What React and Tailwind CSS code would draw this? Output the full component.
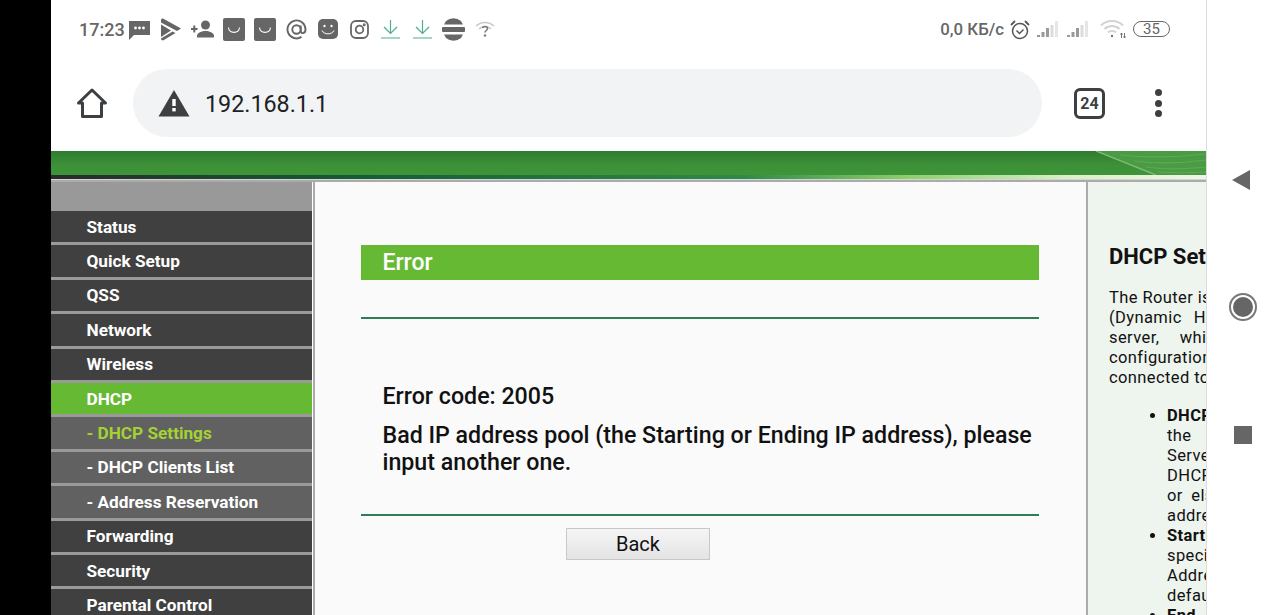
import React from "react";

const G = "#666666";

function Msg() {
  return (
    <svg width="21" height="22" viewBox="0 0 21 22" fill={G}>
      <path d="M0 3h21v14H5l-5 5z" />
      <circle cx="6.500" cy="10" r="1.400" fill="#fff" />
      <circle cx="10.500" cy="10" r="1.400" fill="#fff" />
      <circle cx="14.500" cy="10" r="1.400" fill="#fff" />
    </svg>
  );
}
function Play() {
  return (
    <svg width="22" height="24" viewBox="0 0 22 24" fill={G}>
      <path d="M1 3Q1 1 3 1.500L21 11.500 17 14 1 5.500z" />
      <path d="M1 7.500 11 13.500 1 20z" />
      <path d="M12.500 14.500 15.500 16 3 23.500Q1 23.500 1 21.500z" />
    </svg>
  );
}
function AddUser() {
  return (
    <svg width="23" height="18" viewBox="0 0 23 18" fill={G}>
      <path d="M0 8h6.500v2H0zM2.300 5.500h2v7h-2z" />
      <circle cx="14.500" cy="5" r="4.500" />
      <path d="M6 16c0-3.500 5-5 8.500-5s8.500 1.500 8.500 5v1.500H6z" />
    </svg>
  );
}
function Bag() {
  return (
    <svg width="22" height="23" viewBox="0 0 22 23">
      <rect x="0" y="0" width="22" height="23" rx="2" fill={G} />
      <path d="M5.500 9.500c.6 6.500 10.400 6.500 11 0" stroke="#fff" strokeWidth="1.100" fill="none" />
    </svg>
  );
}
function At() {
  return (
    <svg width="21" height="21" viewBox="0 0 21 21" fill="none" stroke={G} strokeWidth="1.900">
      <circle cx="10.500" cy="10.500" r="4.200" />
      <path d="M14.700 6.500v5.500c0 3 4.800 3 4.800-1.500a9 9 0 1 0-4 7.400" />
    </svg>
  );
}
function Smile() {
  return (
    <svg width="20" height="20" viewBox="0 0 20 20">
      <rect width="20" height="20" rx="5" fill={G} />
      <circle cx="6.500" cy="7" r="1.200" fill="#fff" />
      <circle cx="13.500" cy="7" r="1.200" fill="#fff" />
      <path d="M4 11.500c2 4.500 10 4.500 12 0" stroke="#fff" strokeWidth="1" fill="none" />
    </svg>
  );
}
function Insta() {
  return (
    <svg width="19" height="19" viewBox="0 0 19 19" fill="none" stroke={G} strokeWidth="1.800">
      <rect x="1" y="1" width="17" height="17" rx="5" />
      <circle cx="9.500" cy="9.500" r="3.800" />
      <circle cx="14.200" cy="4.800" r=".6" fill={G} />
    </svg>
  );
}
function Down() {
  return (
    <svg width="19" height="20" viewBox="0 0 19 20" fill="none" stroke="#4fae92" strokeWidth="1.200">
      <path d="M9.500 1v13M3 8l6.500 6.500L16 8M0 19h19" />
    </svg>
  );
}
function Globe() {
  return (
    <svg width="23" height="23" viewBox="0 0 23 23" fill={G}>
      <path d="M4 3a12 12 0 0 1 15 0l2 3.500H2z" />
      <rect x="0" y="9" width="23" height="5" rx="1" />
      <path d="M2 16.500h19l-2 3.500a12 12 0 0 1-15 0z" />
    </svg>
  );
}
function WifiQ() {
  return (
    <svg width="20" height="18" viewBox="0 0 20 18" fill="none">
      <path d="M1 6a13 13 0 0 1 18 0" stroke="#c8c8c8" strokeWidth="1.500" />
      <path d="M4 9a9 9 0 0 1 12 0" stroke="#c8c8c8" strokeWidth="1.500" />
      <path d="M7.500 8c.5-2 5-2 5 .5 0 2-2.500 2-2.500 4" stroke="#777" strokeWidth="1.500" />
      <circle cx="10" cy="15.500" r="1.200" fill="#777" />
    </svg>
  );
}
function Alarm() {
  return (
    <svg width="20" height="21" viewBox="0 0 20 21" fill="none" stroke="#555" strokeWidth="1.500">
      <circle cx="10" cy="12" r="7.500" />
      <path d="M6.500 11.500 9.500 14.500 13.500 10.500" />
      <path d="M1 6 5 2M19 6 15 2" strokeWidth="1.800" />
    </svg>
  );
}
function Signal() {
  return (
    <svg width="23" height="17" viewBox="0 0 23 17">
      <rect x="0" y="14" width="3" height="2" fill="#999" />
      <rect x="4.500" y="11" width="3" height="5" fill="#999" />
      <rect x="9" y="7" width="3" height="9" fill="#999" />
      <rect x="13.500" y="4" width="3" height="12" fill="#dcdcdc" />
      <rect x="18" y="0" width="3" height="16" fill="#e6e6e6" />
    </svg>
  );
}
function Wifi() {
  return (
    <svg width="26" height="20" viewBox="0 0 26 20" fill="none" stroke="#d2d2d2" strokeWidth="2">
      <path d="M1 6.500a16 16 0 0 1 22 0" />
      <path d="M4.500 10a11 11 0 0 1 15 0" />
      <path d="M8 13.500a6 6 0 0 1 8 0" />
      <circle cx="12" cy="17" r="1.200" fill="#777" stroke="none" />
      <path d="M21.500 14v5M24.500 14v5M20.500 15.500l1-1.500 1 1.500M23.500 17.500l1 1.500 1-1.500" stroke="#666" strokeWidth=".9" />
    </svg>
  );
}
function Home() {
  return (
    <svg width="32" height="32" viewBox="0 0 32 32" fill="none" stroke="#3c4043" strokeWidth="3" strokeLinejoin="round">
      <path d="M2.500 16 16 3l13.500 13H25.500V29.500H6.500V16z" />
    </svg>
  );
}
function Warn() {
  return (
    <svg width="32" height="28" viewBox="0 0 32 28">
      <path d="M16 1 31.500 27.500H.5z" fill="#3c4043" />
      <rect x="14.300" y="10" width="3.400" height="7" fill="#fff" />
      <rect x="14.300" y="19" width="3.400" height="3.400" fill="#fff" />
    </svg>
  );
}

const sideRows = [
  ["Status", "main"],
  ["Quick Setup", "main"],
  ["QSS", "main"],
  ["Network", "main"],
  ["Wireless", "main"],
  ["DHCP", "active"],
  ["- DHCP Settings", "subactive"],
  ["- DHCP Clients List", "sub"],
  ["- Address Reservation", "sub"],
  ["Forwarding", "main"],
  ["Security", "main"],
  ["Parental Control", "main"],
];

function SideRow({ label, kind }) {
  const cls =
    kind === "active"
      ? "bg-[#66b933] text-white"
      : kind === "subactive"
        ? "bg-[#616161] text-[#a4d233]"
        : kind === "sub"
          ? "bg-[#616161] text-white"
          : "bg-[#404040] text-white";
  return (
    <div className={`h-[34.4px] shrink-0 border-b-[3px] border-[#9a9a9a] pl-[35.500px] pt-[1px] flex items-center text-[17.200px] font-bold leading-none ${cls}`}>
      {label}
    </div>
  );
}

function JLine({ children }) {
  return <div className="text-justify [text-align-last:justify]">{children}</div>;
}

const statusIcons = [
  <Msg />, <Play />, <AddUser />, <Bag />, <Bag />, <At />, <Smile />, <Insta />, <Down />, <Down />, <Globe />, <WifiQ />,
];

export default function App() {
  return (
    <div className="w-[1280px] h-[615px] flex overflow-hidden bg-white font-['Roboto',sans-serif]">
      <div className="w-[51px] shrink-0 bg-black" />
      <div className="w-[1156px] shrink-0 flex flex-col border-r border-[#dcdcdc] overflow-hidden">
        {/* status bar */}
        <div className="h-[58px] shrink-0 flex items-center justify-between pl-[28px] pr-[36px] text-[#666666]">
          <div className="flex items-center">
            <span className="text-[18px] font-medium w-[45px] whitespace-nowrap pt-[1px]">17:23</span>
            <div className="flex items-center">
              {statusIcons.map((icon, i) => (
                <div key={i} className="w-[31.400px] flex justify-center shrink-0">{icon}</div>
              ))}
            </div>
          </div>
          <div className="flex items-center">
            <span className="text-[16.800px] font-medium mr-[6px] pt-[1px]">0,0 КБ/с</span>
            <Alarm />
            <div className="ml-[7px]"><Signal /></div>
            <div className="ml-[7px]"><Signal /></div>
            <div className="ml-[10px]"><Wifi /></div>
            <div className="ml-[7px] w-[37px] h-[16px] rounded-full border border-[#666666] flex items-center justify-center text-[15px] leading-none">35</div>
          </div>
        </div>
        {/* omnibox */}
        <div className="h-[93px] shrink-0 flex items-start pt-[11px]">
          <div className="w-[82px] h-[68px] flex items-center pl-[25px] shrink-0"><Home /></div>
          <div className="w-[909px] h-[68px] shrink-0 rounded-full bg-[#f1f3f4] flex items-center pl-[25px]">
            <Warn />
            <span className="ml-[15px] pt-[2px] text-[23.300px] text-[#202124]">192.168.1.1</span>
          </div>
          <div className="ml-[32px] w-[31px] h-[31px] mt-[19px] shrink-0 rounded-[6px] border-[3px] border-[#3c4043] flex items-center justify-center text-[16px] font-bold text-[#3c4043] leading-none">24</div>
          <div className="ml-[50px] mt-[20px] flex flex-col gap-[3.500px] shrink-0">
            <div className="w-[7px] h-[7px] rounded-full bg-[#3c4043]" />
            <div className="w-[7px] h-[7px] rounded-full bg-[#3c4043]" />
            <div className="w-[7px] h-[7px] rounded-full bg-[#3c4043]" />
          </div>
        </div>
        {/* router header */}
        <div className="h-[24px] shrink-0 bg-[linear-gradient(180deg,#2f7b31_0%,#3d9138_60%,#3e9439_100%)] overflow-hidden">
          <svg className="ml-auto block" width="110" height="24" viewBox="0 0 110 24" fill="none">
            <path d="M0 0 110 0 110 24 60 24z" fill="#4a9b43" />
            <path d="M0 0 60 24" stroke="#7fb874" strokeWidth="1.500" />
            <path d="M24 4c30 3 60 2 86 -1M38 10c25 3 50 2 72 -1M50 16c20 3 40 2 60 0M62 21c15 1 30 1 48 0" stroke="#5cab55" strokeWidth="1.200" />
          </svg>
        </div>
        <div className="h-[4px] shrink-0 bg-[linear-gradient(90deg,#2a2a2a_0%,#155a34_25%,#2f8a48_60%,#8ccf6a_74%,#d8f0c8_88%,#eef7e6_100%)]" />
        <div className="h-[1px] shrink-0 bg-[#d4d4d4]" />
        <div className="h-[2px] shrink-0 bg-[#ababab]" />
        {/* panels */}
        <div className="flex-1 flex min-h-0">
          <aside className="w-[261px] shrink-0 flex flex-col">
            <div className="h-[29px] shrink-0 bg-[#999999]" />
            {sideRows.map(([label, kind]) => (
              <SideRow key={label} label={label} kind={kind} />
            ))}
          </aside>
          <div className="w-[1px] shrink-0 bg-white" />
          <main className="w-[773px] shrink-0 border-l-2 border-[#ababab] bg-[#fafafa] pt-[63px] pl-[46px] pr-[47px] text-[#111111]">
            <div className="h-[35px] bg-[#66b933] text-white font-medium text-[23px] pl-[21.500px] flex items-center leading-none">Error</div>
            <div className="h-[2px] mt-[37px] bg-[#2f7d55]" />
            <div className="pl-[21.500px] pr-[2px] pt-[64px] h-[195px] font-medium text-[23.200px] leading-[27px]">
              <p>Error code: 2005</p>
              <p className="mt-[12px]">Bad IP address pool (the Starting or Ending IP address), please input another one.</p>
            </div>
            <div className="h-[2px] bg-[#2f7d55]" />
            <div className="flex mt-[12px] pl-[205px]">
              <button className="w-[144px] h-[32px] pb-[1px] border border-[#c8c8c8] bg-[linear-gradient(180deg,#f5f5f5,#e4e4e4)] text-[20px] text-[#111111] flex items-center justify-center leading-none">Back</button>
            </div>
          </main>
          <div className="flex-1 min-w-0 border-l-2 border-[#ababab] bg-[#eef4ee] overflow-hidden pt-[61px] pl-[21px]">
            <div className="w-[322px] text-[#111111] text-[16.500px] leading-[20px] tracking-[0.400px]">
              <h2 className="text-[22px] font-bold leading-[28px] tracking-normal">DHCP Settings</h2>
              <div className="mt-[17px]">
                <div className="whitespace-nowrap">The Router is set up by default as a DHCP</div>
                <JLine>(Dynamic Host Configuration Protocol)</JLine>
                <JLine>server, which provides the TCP/IP</JLine>
                <JLine>configuration for all the PC(s) that are</JLine>
                <div className="whitespace-nowrap">connected to the Router on the LAN.</div>
              </div>
              <ul className="list-disc mt-[18px] pl-[58px] whitespace-nowrap">
                <li>
                  <div><b>DHCP Server</b> - Enable or Disable</div>
                  <div className="[word-spacing:24px]">the server. If you disable</div>
                  <div>Server, you must have another</div>
                  <div>DHCP server within your network</div>
                  <div className="[word-spacing:4px]">or else you must configure</div>
                  <div>address of the computer manually.</div>
                </li>
                <li>
                  <div><b>Start IP Address</b> - This field</div>
                  <div>specifies the first of the IP</div>
                  <div>Address in the pool. The</div>
                  <div>default is 192.168.1.100.</div>
                </li>
                <li className="[word-spacing:12px]"><b>End IP Address</b></li>
              </ul>
            </div>
          </div>
        </div>
      </div>
      {/* android nav */}
      <div className="flex-1 flex flex-col items-center pt-[170px] pr-[1px] bg-white">
        <div className="mr-[5px] w-0 h-0 border-y-[10px] border-y-transparent border-r-[18px] border-r-[#666666]" />
        <div className="mt-[103px] w-[28px] h-[28px] rounded-full border-[2px] border-[#777777] flex items-center justify-center">
          <div className="w-[20px] h-[20px] rounded-full bg-[#666666]" />
        </div>
        <div className="mt-[105px] w-[18px] h-[18px] bg-[#666666]" />
      </div>
    </div>
  );
}
